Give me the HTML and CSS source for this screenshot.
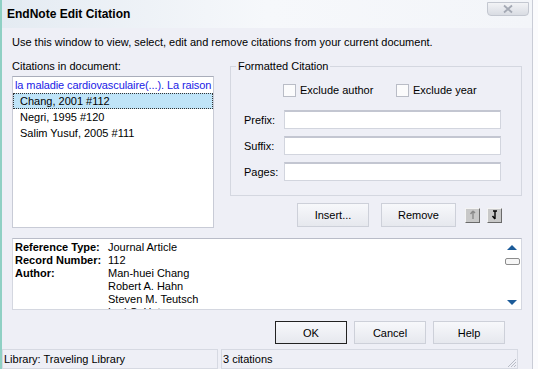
FILE: index.html
```html
<!DOCTYPE html>
<html lang="en">
<head>
    <meta charset="UTF-8">
    <title>EndNote Edit Citation</title>
    <link rel="stylesheet" href="styles.css">
</head>
<body>
    <div class="window">
        <div class="titlebar">
            <span class="title">EndNote Edit Citation</span>
            <button class="close">
                <svg width="14" height="10" viewBox="0 0 14 10"><path d="M3 1.5 L11 8.5 M11 1.5 L3 8.5" stroke="#a4a9b4" stroke-width="1.8"/></svg>
            </button>
        </div>
        <div class="content">
            <p class="intro">Use this window to view, select, edit and remove citations from your current document.</p>
            <div class="main">
                <div class="citations">
                    <div class="caption">Citations in document:</div>
                    <ul class="listbox">
                        <li class="item context">la maladie cardiovasculaire(...). La raison</li>
                        <li class="item selected">Chang, 2001 #112</li>
                        <li class="item">Negri, 1995 #120</li>
                        <li class="item">Salim Yusuf, 2005 #111</li>
                    </ul>
                </div>
                <div class="side">
                    <fieldset class="formatted">
                        <legend>Formatted Citation</legend>
                        <div class="checks">
                            <label class="check"><span class="box"></span>Exclude author</label>
                            <label class="check"><span class="box"></span>Exclude year</label>
                        </div>
                        <div class="field"><span class="field-label">Prefix:</span><input type="text" class="text"></div>
                        <div class="field"><span class="field-label">Suffix:</span><input type="text" class="text"></div>
                        <div class="field"><span class="field-label">Pages:</span><input type="text" class="text"></div>
                    </fieldset>
                    <div class="actions">
                        <button class="btn insert">Insert...</button>
                        <button class="btn remove">Remove</button>
                        <button class="arrow disabled">
                            <svg width="8" height="10" viewBox="0 0 8 10"><path d="M4 1 V9 M4 1 L1.5 4 M4 1 L6 3" stroke="#8a8a8a" stroke-width="1.4" fill="none"/></svg>
                        </button>
                        <button class="arrow">
                            <svg width="8" height="10" viewBox="0 0 8 10"><path d="M4 1 V9 M4 9 L1.5 6 M2 1 H6" stroke="#000" stroke-width="1.4" fill="none"/></svg>
                        </button>
                    </div>
                </div>
            </div>
            <div class="details">
                <div class="record">
                    <span class="key">Reference Type:</span><span>Journal Article</span>
                    <span class="key">Record Number:</span><span>112</span>
                    <span class="key">Author:</span>
                    <span class="authors">Man-huei Chang<br>Robert A. Hahn<br>Steven M. Teutsch<br>Lori C. Hutwagner</span>
                </div>
                <div class="scroller">
                    <svg width="12" height="7" viewBox="0 0 12 7"><path d="M1 6 L6 1 L11 6 Z" fill="#1b5b99"/></svg>
                    <span class="thumb"></span>
                    <svg class="down" width="12" height="7" viewBox="0 0 12 7"><path d="M1 1 L6 6 L11 1 Z" fill="#1b5b99"/></svg>
                </div>
            </div>
            <div class="dialog-buttons">
                <button class="btn default">OK</button>
                <button class="btn">Cancel</button>
                <button class="btn">Help</button>
            </div>
        </div>
        <div class="statusbar">
            <span class="panel library">Library: Traveling Library</span>
            <span class="panel count">3 citations</span>
            <svg class="grip" width="12" height="12" viewBox="0 0 12 12"><path d="M11 3 L3 11 M11 6 L6 11 M11 9 L9 11" stroke="#b8bcc6" stroke-width="1"/></svg>
        </div>
    </div>
</body>
</html>
```

FILE: styles.css
```css
body {
    margin: 0;
    background-color: #fbfbfd;
    font-family: "Liberation Sans", Arial, sans-serif;
    font-size: 11px;
    color: #000;
}
.window {
    width: 533px;
    height: 369px;
    box-sizing: border-box;
    border-left: 2px solid #8fd0c4;
    border-right: 1px solid #c9ccd6;
    background-color: #eeeff6;
    display: flex;
    flex-direction: column;
}
.titlebar {
    height: 28px;
    display: flex;
    justify-content: space-between;
    padding-left: 5px;
    padding-right: 3px;
    background: linear-gradient(to right, #e4ebf2, #f6f8fb 50%, #f3f5f9);
}
.title {
    font-weight: bold;
    font-size: 12px;
    line-height: 28px;
}
.close {
    width: 42px;
    height: 14px;
    margin-top: 2px;
    padding: 0;
    border: 1px solid #c3c7d0;
    border-radius: 0 0 4px 4px;
    background: linear-gradient(#f2f3f6, #d9dce3);
    display: flex;
    justify-content: center;
    align-items: center;
}
.content {
    flex: 1;
    padding: 0 10px;
}
.intro {
    margin: 7px 0 0;
    line-height: 14px;
}
.main {
    display: flex;
    gap: 16px;
    margin-top: 10px;
}
.citations {
    width: 202px;
}
.caption {
    line-height: 14px;
    margin-bottom: 3px;
}
.listbox {
    list-style: none;
    margin: 0;
    padding: 0;
    height: 152px;
    box-sizing: border-box;
    border: 1px solid #c8cbd6;
    border-top-color: #a9adba;
    background-color: #fff;
}
.item {
    line-height: 16px;
    padding-left: 7px;
    white-space: nowrap;
    overflow: hidden;
}
.item.context {
    padding-left: 2px;
    letter-spacing: -0.1px;
    color: #1a1ae6;
}
.item.selected {
    background-color: #bfe4f8;
    outline: 1px dotted #333;
    outline-offset: -1px;
}
.side {
    width: 292px;
}
.formatted {
    margin: 0;
    height: 137px;
    box-sizing: border-box;
    padding: 0 0 0 5px;
    border: 1px solid #d4d7e0;
}
.formatted legend {
    padding: 0 2px;
    line-height: 14px;
}
.checks {
    display: flex;
    margin: 10px 0 0 47px;
    height: 14px;
    align-items: center;
}
.check {
    display: flex;
    align-items: center;
    gap: 4px;
    width: 113px;
}
.box {
    width: 11px;
    height: 11px;
    border: 1px solid #b9bcc6;
    background-color: #fbfbfc;
}
.field {
    display: flex;
    align-items: center;
    margin-left: 8px;
    margin-top: 7px;
}
.checks + .field {
    margin-top: 13px;
}
.field-label {
    width: 40px;
}
.text {
    width: 217px;
    height: 19px;
    box-sizing: border-box;
    margin: 0;
    border: 1px solid #d2d5de;
    border-top: 2px solid #c3c6d1;
    background-color: #fff;
}
.actions {
    display: flex;
    align-items: center;
    margin-top: 7px;
    padding-left: 67px;
    height: 24px;
}
.btn {
    height: 24px;
    padding: 0;
    font-family: inherit;
    font-size: 11px;
    color: #000;
    border: 1px solid #cdd0d9;
    background: linear-gradient(#f7f8fb, #e6e8ee);
}
.insert {
    width: 72px;
}
.remove {
    width: 75px;
    margin-left: 12px;
}
.arrow {
    width: 15px;
    height: 15px;
    padding: 0;
    margin-left: 7px;
    background-color: #c8c8c8;
    border: 1px solid;
    border-color: #f4f4f4 #6a6a6a #6a6a6a #f4f4f4;
    display: flex;
    justify-content: center;
    align-items: center;
}
.arrow.disabled {
    margin-left: 9px;
}
.details {
    display: flex;
    margin-top: 10px;
    height: 72px;
    box-sizing: border-box;
    border: 1px solid #d4d7e0;
    border-top-color: #b9bcc8;
    background-color: #fff;
    overflow: hidden;
}
.record {
    flex: 1;
    display: grid;
    grid-template-columns: 93px 1fr;
    align-content: start;
    padding: 2px 0 0 2px;
    line-height: 13px;
}
.key {
    font-weight: bold;
}
.scroller {
    width: 18px;
    display: flex;
    flex-direction: column;
    align-items: center;
    padding-top: 5px;
}
.thumb {
    width: 13px;
    height: 5px;
    margin-top: 7px;
    border: 1px solid #8c8c8c;
    border-radius: 2px;
    background-color: #f6f6f6;
}
.down {
    margin-top: auto;
    margin-bottom: 3px;
}
.dialog-buttons {
    display: flex;
    justify-content: flex-end;
    gap: 7px;
    margin-top: 11px;
    padding-right: 17px;
}
.dialog-buttons .btn {
    width: 72px;
    height: 23px;
}
.dialog-buttons .default {
    border-color: #222;
}
.statusbar {
    height: 20px;
    margin-top: auto;
    display: flex;
    gap: 3px;
    padding-right: 14px;
    position: relative;
}
.panel {
    border: 1px solid #d6d9e2;
    line-height: 18px;
    padding-left: 1px;
    white-space: nowrap;
}
.library {
    width: 213px;
}
.count {
    flex: 1;
}
.grip {
    position: absolute;
    right: 15px;
    bottom: 1px;
}
```
